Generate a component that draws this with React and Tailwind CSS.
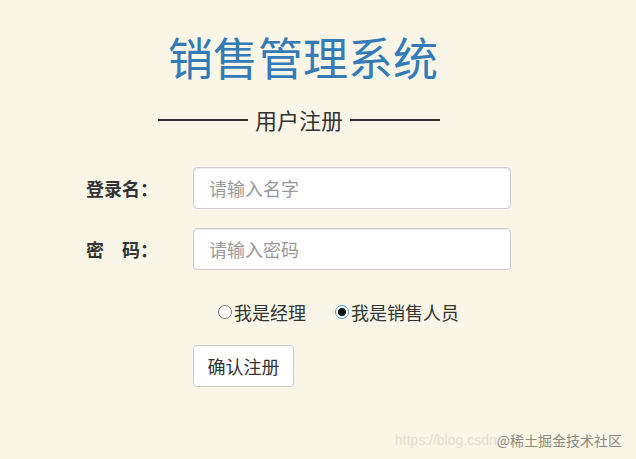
import { useState } from "react";

export default function App() {
  const [role, setRole] = useState("sales");

  const radios = [
    { id: "manager", label: "我是经理" },
    { id: "sales", label: "我是销售人员" },
  ];

  return (
    <div className="relative h-[459px] w-full overflow-hidden bg-[#f9f6e7] font-['Noto_Sans_CJK_SC','Noto_Sans',sans-serif] text-[#333]">
      {/* header */}
      <div className="pt-[34px]">
        <h1 className="ml-[168px] whitespace-nowrap text-[45px] font-normal leading-[45px] text-[#337ab7]">
          销售管理系统
        </h1>
        <div className="ml-[158px] mt-[29px] flex w-[282px] items-center gap-[7px]">
          <div className="h-[2px] flex-1 bg-[#333]" />
          <span className="text-[22px] leading-[23px] text-[#333]">用户注册</span>
          <div className="h-[2px] flex-1 bg-[#333]" />
        </div>
      </div>

      {/* form */}
      <div className="mt-[36px] flex flex-col">
        <div className="flex items-center pl-[86px]">
          <label className="w-[107px] text-[18px] font-bold leading-[18px]">登录名：</label>
          <input
            placeholder="请输入名字"
            className="h-[42px] w-[318px] rounded-[4px] border border-[#ccc] bg-white pl-[15px] text-[18px] text-[#555] shadow-[inset_0_1px_1px_rgba(0,0,0,0.075)] outline-none placeholder:text-[#999]"
          />
        </div>
        <div className="mt-[19px] flex items-center pl-[86px]">
          <label className="w-[107px] text-[18px] font-bold leading-[18px]">密　码：</label>
          <input
            type="password"
            placeholder="请输入密码"
            className="h-[42px] w-[318px] rounded-[4px] border border-[#ccc] bg-white pl-[15px] text-[18px] text-[#555] shadow-[inset_0_1px_1px_rgba(0,0,0,0.075)] outline-none placeholder:text-[#999]"
          />
        </div>

        <div className="mt-[30px] flex items-center gap-[29px] pl-[218px]">
          {radios.map((r) => (
            <button
              key={r.id}
              onClick={() => setRole(r.id)}
              className="flex items-center text-[18px] leading-[24px] text-[#333]"
            >
              <span
                className={`mr-[2px] flex h-[14px] w-[14px] items-center justify-center rounded-full border bg-white ${
                  role === r.id ? "border-[#3c9ad8]" : "border-[#777]"
                }`}
              >
                {role === r.id && <span className="h-[8px] w-[8px] rounded-full bg-[#111]" />}
              </span>
              {r.label}
            </button>
          ))}
        </div>

        <div className="mt-[21px] pl-[193px]">
          <button className="h-[42px] w-[101px] rounded-[4px] border border-[#ccc] bg-white text-[18px] text-[#333]">
            确认注册
          </button>
        </div>
      </div>

      {/* watermark */}
      <div className="absolute bottom-[11px] right-[14px] flex items-center text-[14px] leading-[16px]">
        <span className="font-['Liberation_Sans',sans-serif] text-[#e2ddcc]">https://blog.csdn</span>
        <span className="text-[#8c8a84]">@稀土掘金技术社区</span>
      </div>
    </div>
  );
}
